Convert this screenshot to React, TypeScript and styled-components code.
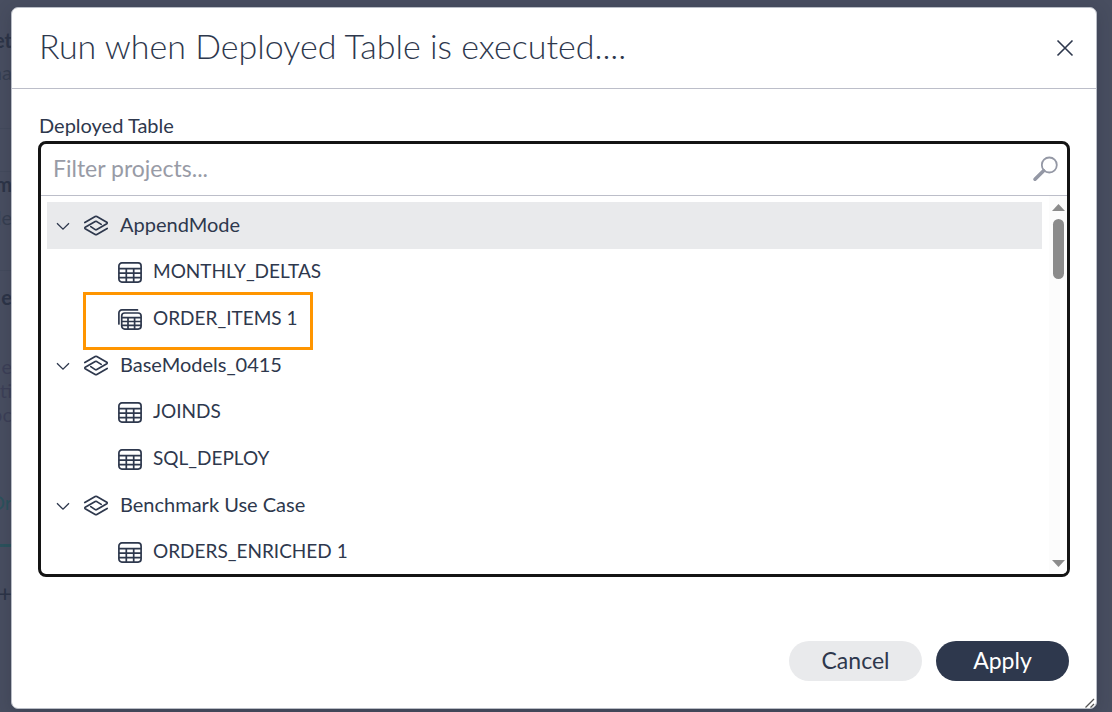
import React from "react";
import styled, { createGlobalStyle, css } from "styled-components";

const ink = "#2e384d";

const GlobalStyle = createGlobalStyle`
  *, *::before, *::after { box-sizing: border-box; }
  html, body, #root { height: 100%; }
  body {
    margin: 0;
    background: #484e60;
    color: ${ink};
    font-family: Lato, "Liberation Sans", sans-serif;
  }
  button, input { font: inherit; color: inherit; }
  ul { list-style: none; margin: 0; padding: 0; }
`;

const Page = styled.div`
  position: relative;
  min-height: 100%;
  display: flex;
  overflow: hidden;
`;

const Behind = styled.aside`
  position: absolute;
  inset: 0 auto 0 0;
  width: 12px;
  overflow: hidden;
  display: flex;
  flex-direction: column;
  padding-top: 28px;
`;

const BehindLine = styled.div<{ $h: number; $tone?: string; $bold?: boolean; $rule?: string; $large?: boolean }>`
  flex: none;
  height: ${(p) => p.$h}px;
  display: flex;
  justify-content: flex-end;
  font-size: ${(p) => (p.$large ? 24 : 20)}px;
  line-height: 24px;
  white-space: nowrap;
  font-weight: ${(p) => (p.$bold ? 700 : 400)};
  color: ${(p) => p.$tone ?? "#2c3447"};
  ${(p) => p.$rule && css`border-bottom: ${p.$rule};`}
`;

const Overlay = styled.div`
  position: relative;
  flex: 1;
  display: flex;
  height: 100vh;
  min-height: 480px;
  padding: 7px 15px 3px 11px;
`;

const Dialog = styled.section`
  position: relative;
  flex: 1;
  min-width: 0;
  display: flex;
  flex-direction: column;
  background: #fff;
  border: 1px solid #b9bdc6;
  border-radius: 7px;
  box-shadow: 0 4px 16px rgba(30, 36, 52, 0.25);
`;

const Header = styled.header`
  flex: none;
  height: 81px;
  display: flex;
  align-items: center;
  justify-content: space-between;
  padding: 0 22px 0 27px;
  border-bottom: 1px solid #bcbec9;
`;

const Title = styled.h1`
  margin: 0;
  padding-bottom: 4px;
  font-size: 34px;
  line-height: 40px;
  font-weight: 300;
`;

const IconButton = styled.button`
  display: flex;
  border: 0;
  padding: 0;
  background: none;
`;

const Body = styled.div`
  flex: 1;
  min-height: 0;
  display: flex;
  flex-direction: column;
  padding: 24px 26px 64px;
`;

const FieldLabel = styled.label`
  padding-left: 1px;
  margin-bottom: 4px;
  font-size: 20px;
  line-height: 24px;
`;

const Picker = styled.div`
  flex: 1;
  min-height: 0;
  display: flex;
  flex-direction: column;
  border: 3px solid #141414;
  border-radius: 8px;
  overflow: hidden;
`;

const FilterRow = styled.div`
  flex: none;
  display: flex;
  align-items: center;
  height: 52px;
  padding: 0 8px 2px 12px;
  border-bottom: 1px solid #bcbec9;
`;

const FilterInput = styled.input`
  flex: 1;
  min-width: 0;
  padding: 0 0 2px;
  border: 0;
  outline: 0;
  background: none;
  font-size: 23px;
  line-height: 32px;
  &::placeholder { color: #989ba6; opacity: 1; }
`;

const ListArea = styled.div`
  flex: 1;
  min-height: 0;
  display: flex;
`;

const Tree = styled.ul`
  flex: 1;
  min-width: 0;
  overflow: hidden;
  padding: 6px 7px 0 6px;
`;

const Group = styled.li`
  & + & { margin-top: -1px; }
`;

const Name = styled.span`
  padding-bottom: 4px;
`;

const ProjectRow = styled.div<{ $active?: boolean }>`
  display: flex;
  align-items: center;
  height: 47px;
  padding-left: 9px;
  font-size: 20px;
  line-height: 24px;
  background: ${(p) => (p.$active ? "#e9eaec" : "transparent")};
  svg + svg { margin: 0 11px 0 13px; }
`;

const TableRow = styled.li<{ $marked?: boolean }>`
  position: relative;
  display: flex;
  align-items: center;
  gap: 11px;
  height: 47px;
  padding-left: 71px;
  font-size: 19px;
  line-height: 24px;
  ${(p) =>
    p.$marked &&
    css`
      &::after {
        content: "";
        position: absolute;
        z-index: 1;
        left: 36px;
        top: -4px;
        width: 230px;
        height: 58px;
        border: 3px solid #ff9500;
      }
    `}
`;

const ScrollTrack = styled.div`
  flex: none;
  width: 18px;
  display: flex;
  flex-direction: column;
  align-items: center;
  padding: 8px 0 7px;
  background: #fcfcfc;
`;

const ScrollThumb = styled.div`
  width: 11px;
  height: 60px;
  margin: 8px 0 auto;
  border-radius: 6px;
  background: #8b8b8b;
`;

const Footer = styled.footer`
  flex: none;
  display: flex;
  justify-content: flex-end;
  gap: 14px;
  padding: 0 27px 27px;
`;

const PillButton = styled.button<{ $primary?: boolean }>`
  width: 133px;
  height: 40px;
  border: 0;
  border-radius: 20px;
  padding: 0 0 2px;
  font-size: 23px;
  line-height: 32px;
  background: ${(p) => (p.$primary ? ink : "#e9eaec")};
  color: ${(p) => (p.$primary ? "#fff" : ink)};
`;

const Grip = styled.svg`
  position: absolute;
  right: 1px;
  bottom: 0;
`;

const Chevron = () => (
  <svg width="14" height="14" viewBox="0 0 14 14" fill="none" stroke={ink} strokeWidth="1.3" aria-hidden="true">
    <path d="M1 4.2 7 10.2 13 4.2" />
  </svg>
);

const ProjectIcon = () => (
  <svg width="26" height="22" viewBox="0 0 26 22" fill="none" stroke={ink} strokeWidth="1.7" strokeLinejoin="round" strokeLinecap="round" aria-hidden="true">
    <path d="M1.8 7.6 12.2 1.5a1.6 1.6 0 0 1 1.6 0L23.8 7.3a.9.9 0 0 1 0 1.5L13.8 14.6a1.6 1.6 0 0 1-1.6 0L7.8 11.6" />
    <path d="M24.2 13.4 13.8 19.5a1.6 1.6 0 0 1-1.6 0L2.2 13.7a.9.9 0 0 1 0-1.5L12.2 6.6a1.6 1.6 0 0 1 1.6 0L18.2 9.4" />
  </svg>
);

const TableIcon = () => (
  <svg width="24" height="21" viewBox="0 0 24 21" fill="none" stroke={ink} strokeWidth="1.7" aria-hidden="true">
    <rect x="0.9" y="0.9" width="22.2" height="19.2" rx="3" />
    <path d="M.8 6.6H23.2M.8 11.2H23.2M.8 15.7H23.2M8.3 6.6V20M15.7 6.6V20" />
  </svg>
);

const StackedTableIcon = () => (
  <svg width="24" height="21" viewBox="0 0 24 21" fill="none" stroke={ink} strokeWidth="1.7" aria-hidden="true">
    <path d="M.9 15V3.9a3 3 0 0 1 3-3H19.5" strokeLinecap="round" />
    <rect x="3.7" y="4" width="19.4" height="16.1" rx="3" />
    <path d="M3.6 8.6H23.2M3.6 12.5H23.2M3.6 16.4H23.2M10 8.6V20M16.6 8.6V20" />
  </svg>
);

const SearchIcon = () => (
  <svg width="28" height="28" viewBox="0 0 28 28" fill="none" stroke="#9498a5" aria-hidden="true">
    <circle cx="18.3" cy="10" r="7.5" strokeWidth="1.8" />
    <path d="M12.6 15.7 4 24.2" strokeWidth="3.6" strokeLinecap="round" />
  </svg>
);

const Arrow = ({ down }: { down?: boolean }) => (
  <svg width="13" height="7" viewBox="0 0 13 7" fill="#8b8b8b" aria-hidden="true">
    <path d={down ? "M0 0H13L6.5 7Z" : "M0 7H13L6.5 0Z"} />
  </svg>
);

type Table = { name: string; stacked?: boolean; marked?: boolean };

const projects: { name: string; active?: boolean; tables: Table[] }[] = [
  {
    name: "AppendMode",
    active: true,
    tables: [{ name: "MONTHLY_DELTAS" }, { name: "ORDER_ITEMS 1", stacked: true, marked: true }],
  },
  { name: "BaseModels_0415", tables: [{ name: "JOINDS" }, { name: "SQL_DEPLOY" }] },
  { name: "Benchmark Use Case", tables: [{ name: "ORDERS_ENRICHED 1" }] },
];

export default function App() {
  return (
    <Page>
      <GlobalStyle />
      <Behind aria-hidden="true">
        <BehindLine $h={32} $bold>et</BehindLine>
        <BehindLine $h={69} $tone="#363e50" $rule="1px solid #434a5c">ma</BehindLine>
        <BehindLine $h={43} $rule="1px solid #434a5c" />
        <BehindLine $h={33} $bold>m</BehindLine>
        <BehindLine $h={66} $tone="#363e50" $rule="1px solid #434a5c">le</BehindLine>
        <BehindLine $h={14} />
        <BehindLine $h={69} $bold>e</BehindLine>
        <BehindLine $h={24} $tone="#3c3f57">e</BehindLine>
        <BehindLine $h={24} $tone="#3c3f57">ti</BehindLine>
        <BehindLine $h={88} $tone="#3c3f57">oc</BehindLine>
        <BehindLine $h={57} $tone="#2b525c" $rule="3px solid #2b525c">Or</BehindLine>
        <BehindLine $h={34} />
        <BehindLine $h={32} $large>+</BehindLine>
      </Behind>
      <Overlay>
        <Dialog role="dialog" aria-labelledby="dialog-title">
          <Header>
            <Title id="dialog-title">Run when Deployed Table is executed....</Title>
            <IconButton type="button" aria-label="Close">
              <svg width="18" height="18" viewBox="0 0 18 18" fill="none" stroke={ink} strokeWidth="1.6">
                <path d="M1.5 1.5 16.5 16.5M16.5 1.5 1.5 16.5" />
              </svg>
            </IconButton>
          </Header>
          <Body>
            <FieldLabel htmlFor="table-filter">Deployed Table</FieldLabel>
            <Picker>
              <FilterRow>
                <FilterInput id="table-filter" type="text" placeholder="Filter projects..." />
                <SearchIcon />
              </FilterRow>
              <ListArea>
                <Tree>
                  {projects.map((project) => (
                    <Group key={project.name}>
                      <ProjectRow $active={project.active}>
                        <Chevron />
                        <ProjectIcon />
                        <Name>{project.name}</Name>
                      </ProjectRow>
                      <ul>
                        {project.tables.map((table) => (
                          <TableRow key={table.name} $marked={table.marked}>
                            {table.stacked ? <StackedTableIcon /> : <TableIcon />}
                            <Name>{table.name}</Name>
                          </TableRow>
                        ))}
                      </ul>
                    </Group>
                  ))}
                </Tree>
                <ScrollTrack>
                  <Arrow />
                  <ScrollThumb />
                  <Arrow down />
                </ScrollTrack>
              </ListArea>
            </Picker>
          </Body>
          <Footer>
            <PillButton type="button">Cancel</PillButton>
            <PillButton type="button" $primary>Apply</PillButton>
          </Footer>
          <Grip width="10" height="10" viewBox="0 0 10 10" stroke="#555" strokeWidth="1.3" aria-hidden="true">
            <path d="M.5 9.5 9 1M5.5 9.5 9 6" />
          </Grip>
        </Dialog>
      </Overlay>
    </Page>
  );
}
